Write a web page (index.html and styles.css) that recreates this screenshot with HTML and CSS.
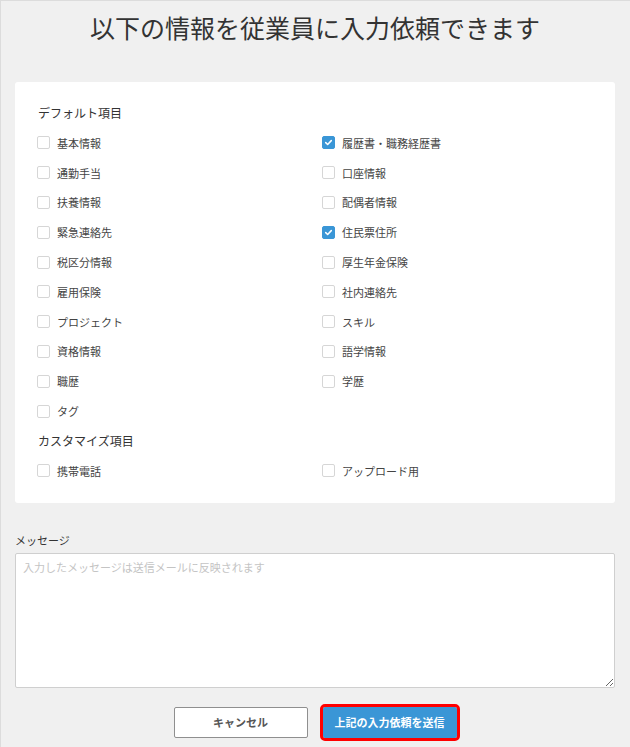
FILE: index.html
```html
<!DOCTYPE html>
<html lang="ja">
<head>
<meta charset="utf-8">
<link rel="stylesheet" href="styles.css">
</head>
<body>
<div class="page">
  <h1 class="title">以下の情報を従業員に入力依頼できます</h1>
  <div class="card">
    <div class="section-title">デフォルト項目</div>
    <div class="grid">
      <label class="item"><span class="cb"></span>基本情報</label>
      <label class="item"><span class="cb checked"><svg viewBox="0 0 13 13"><path d="M3.2 6.6 L5.5 8.8 L9.8 4.3" fill="none" stroke="#fff" stroke-width="1.8" stroke-linecap="round" stroke-linejoin="round"/></svg></span>履歴書・職務経歴書</label>
      <label class="item"><span class="cb"></span>通勤手当</label>
      <label class="item"><span class="cb"></span>口座情報</label>
      <label class="item"><span class="cb"></span>扶養情報</label>
      <label class="item"><span class="cb"></span>配偶者情報</label>
      <label class="item"><span class="cb"></span>緊急連絡先</label>
      <label class="item"><span class="cb checked"><svg viewBox="0 0 13 13"><path d="M3.2 6.6 L5.5 8.8 L9.8 4.3" fill="none" stroke="#fff" stroke-width="1.8" stroke-linecap="round" stroke-linejoin="round"/></svg></span>住民票住所</label>
      <label class="item"><span class="cb"></span>税区分情報</label>
      <label class="item"><span class="cb"></span>厚生年金保険</label>
      <label class="item"><span class="cb"></span>雇用保険</label>
      <label class="item"><span class="cb"></span>社内連絡先</label>
      <label class="item"><span class="cb"></span>プロジェクト</label>
      <label class="item"><span class="cb"></span>スキル</label>
      <label class="item"><span class="cb"></span>資格情報</label>
      <label class="item"><span class="cb"></span>語学情報</label>
      <label class="item"><span class="cb"></span>職歴</label>
      <label class="item"><span class="cb"></span>学歴</label>
      <label class="item"><span class="cb"></span>タグ</label>
    </div>
    <div class="section-title">カスタマイズ項目</div>
    <div class="grid">
      <label class="item"><span class="cb"></span>携帯電話</label>
      <label class="item"><span class="cb"></span>アップロード用</label>
    </div>
  </div>
  <div class="message">
    <div class="message-label">メッセージ</div>
    <textarea class="message-input" placeholder="入力したメッセージは送信メールに反映されます"></textarea>
  </div>
  <div class="actions">
    <button class="btn btn-cancel">キャンセル</button>
    <button class="btn btn-submit">上記の入力依頼を送信</button>
  </div>
</div>
</body>
</html>
```

FILE: styles.css
```css
html, body {
  margin: 0;
  padding: 0;
  height: 100%;
}
body {
  background: #f0f0f0;
  font-family: "Noto Sans CJK JP", "Noto Sans", sans-serif;
  color: #333;
  overflow: hidden;
}
.page {
  box-sizing: border-box;
  height: 100%;
  border-top: 1px solid #dcdcdc;
  border-left: 1px solid #dcdcdc;
  padding: 0 15px 0 14px;
}
.title {
  margin: 0;
  padding-top: 11px;
  height: 81px;
  box-sizing: border-box;
  font-size: 25px;
  line-height: 30px;
  font-weight: 400;
  text-align: center;
  color: #333;
}
.card {
  background: #fff;
  border-radius: 3px;
  padding: 16px 22px 17px 22px;
}
.section-title {
  height: 30px;
  line-height: 30px;
  font-size: 12px;
  color: #333;
  padding-left: 1px;
}
.grid {
  display: grid;
  grid-template-columns: 285px 1fr;
  grid-auto-rows: 29.8px;
}
.item {
  display: flex;
  align-items: center;
  gap: 7px;
  font-size: 11px;
  color: #444;
}
.cb {
  box-sizing: border-box;
  width: 13px;
  height: 13px;
  border: 1px solid #d6d6d6;
  border-radius: 2px;
  background: #fff;
  display: flex;
  flex: none;
}
.cb.checked {
  background: #3a96d6;
  border-color: #3a96d6;
}
.cb svg {
  width: 11px;
  height: 11px;
}
.message {
  margin-top: 28px;
}
.message-label {
  font-size: 11px;
  line-height: 18px;
  color: #333;
  margin-bottom: 4px;
}
.message-input {
  display: block;
  box-sizing: border-box;
  width: 100%;
  height: 135px;
  margin: 0;
  border: 1px solid #cfcfcf;
  border-radius: 2px;
  padding: 5px 7px;
  font-family: "Noto Sans CJK JP", sans-serif;
  font-size: 11px;
  line-height: 16px;
  resize: vertical;
  background: #fff;
}
.message-input::placeholder {
  color: #c4c4c4;
}
.actions {
  display: flex;
  justify-content: center;
  gap: 15px;
  margin-top: 19px;
}
.btn {
  box-sizing: border-box;
  width: 134px;
  height: 31px;
  font-family: "Noto Sans CJK JP", sans-serif;
  font-size: 11px;
  font-weight: 700;
  border-radius: 2px;
  padding: 0;
}
.btn-cancel {
  background: #fff;
  border: 1px solid #8f8f8f;
  color: #555;
}
.btn-submit {
  background: #3a96d6;
  border: none;
  color: #fff;
  outline: 3px solid #ff0000;
  outline-offset: 0;
}
```
